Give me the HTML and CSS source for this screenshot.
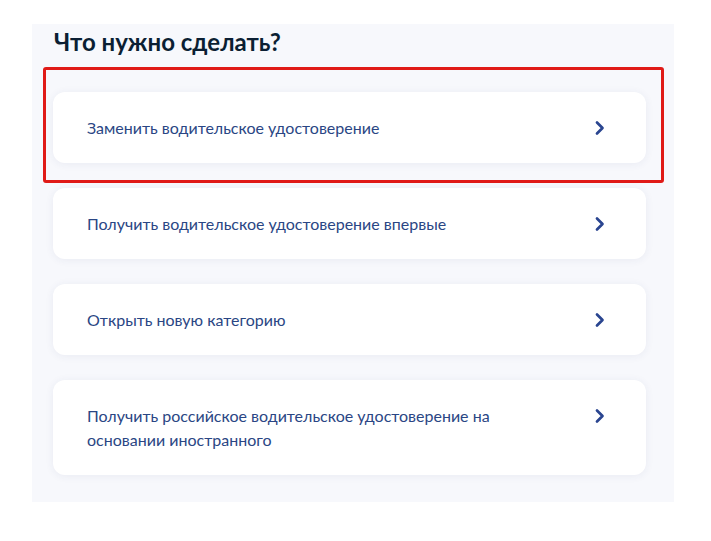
FILE: index.html
```html
<!DOCTYPE html>
<html lang="ru">
<head>
<meta charset="utf-8">
<link rel="stylesheet" href="styles.css">
</head>
<body>
<section class="panel">
  <h2 class="title">Что нужно сделать?</h2>
  <div class="list">
    <a class="card highlighted" href="#">
      <span class="card-text">Заменить водительское удостоверение</span>
      <svg class="chev" viewBox="0 0 24 24" width="24" height="24"><path d="M9 6.5l5.5 5.5L9 17.5" fill="none" stroke="#2a4590" stroke-width="2.7" stroke-linecap="round" stroke-linejoin="round"/></svg>
    </a>
    <a class="card" href="#">
      <span class="card-text">Получить водительское удостоверение впервые</span>
      <svg class="chev" viewBox="0 0 24 24" width="24" height="24"><path d="M9 6.5l5.5 5.5L9 17.5" fill="none" stroke="#2a4590" stroke-width="2.7" stroke-linecap="round" stroke-linejoin="round"/></svg>
    </a>
    <a class="card" href="#">
      <span class="card-text">Открыть новую категорию</span>
      <svg class="chev" viewBox="0 0 24 24" width="24" height="24"><path d="M9 6.5l5.5 5.5L9 17.5" fill="none" stroke="#2a4590" stroke-width="2.7" stroke-linecap="round" stroke-linejoin="round"/></svg>
    </a>
    <a class="card" href="#">
      <span class="card-text">Получить российское водительское удостоверение на<br>основании иностранного</span>
      <svg class="chev" viewBox="0 0 24 24" width="24" height="24"><path d="M9 6.5l5.5 5.5L9 17.5" fill="none" stroke="#2a4590" stroke-width="2.7" stroke-linecap="round" stroke-linejoin="round"/></svg>
    </a>
  </div>
</section>
</body>
</html>
```
FILE: styles.css
```css
html, body {
  margin: 0;
  padding: 0;
  background: #ffffff;
}
body {
  font-family: Lato, "Noto Sans", sans-serif;
}
.panel {
  margin: 24px 0 0 32px;
  width: 642px;
  box-sizing: border-box;
  padding: 3px 28px 27px 21px;
  background: #f7f8fc;
}
.title {
  margin: 0 0 0 1px;
  font-size: 24px;
  line-height: 30px;
  font-weight: 700;
  color: #0b1f33;
}
.list {
  margin-top: 35px;
  display: flex;
  flex-direction: column;
  gap: 25px;
}
.card {
  position: relative;
  display: flex;
  align-items: flex-start;
  justify-content: space-between;
  padding: 24px 34px 23px 34px;
  background: #ffffff;
  border-radius: 12px;
  box-shadow: 0 1px 8px rgba(40, 60, 120, 0.07);
  text-decoration: none;
}
.card-text {
  font-size: 16px;
  line-height: 24px;
  color: #2a4684;
}
.chev {
  flex: none;
  display: block;
}
.highlighted::after {
  content: "";
  position: absolute;
  left: -10px;
  top: -25px;
  right: -18px;
  bottom: -20px;
  border: 3px solid #e01a17;
  border-radius: 3px;
  pointer-events: none;
}
```
